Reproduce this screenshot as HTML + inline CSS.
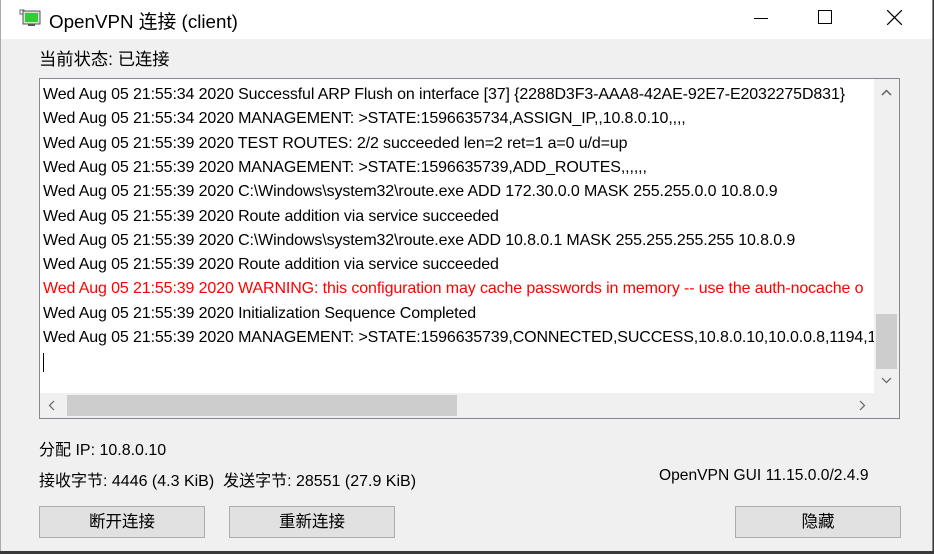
<!DOCTYPE html>
<html><head><meta charset="utf-8"><style>
*{margin:0;padding:0;box-sizing:border-box}
body{width:934px;height:554px;background:#3a3a3a;font-family:"Liberation Sans","Noto Sans CJK SC",sans-serif;position:relative;overflow:hidden;color:#000}
.win{position:absolute;left:0;top:0;width:933px;height:551px;background:#f0f0f0;border-right:1px solid #888;border-left:1px solid #aaa}
.title{position:absolute;left:0;top:0;width:100%;height:39px;background:#fff}
.t{position:absolute;font-size:18.8px;white-space:nowrap}
.s{position:absolute;font-size:15px;white-space:nowrap}
.log{position:absolute;left:38px;top:78px;width:861px;height:341px;background:#fff;border:1px solid #828790}
.line{position:absolute;left:3px;font-size:16px;white-space:nowrap;letter-spacing:-0.12px}
.vs{position:absolute;left:834px;top:0;width:25px;height:314px;background:#f0f0f0}
.hs{position:absolute;left:0;top:314px;width:834px;height:25px;background:#f0f0f0}
.corner{position:absolute;left:834px;top:314px;width:25px;height:25px;background:#f0f0f0}
.btn{position:absolute;top:506px;width:166px;height:32px;background:#e1e1e1;border:1px solid #adadad;font-size:16.5px;text-align:center;line-height:30px}
</style></head><body>
<div class="win">
<div class="title">
<svg style="position:absolute;left:18px;top:9px" width="22" height="18" viewBox="0 0 22 18"><rect x="1" y="1" width="4" height="4" fill="#fff" stroke="#666"/><rect x="4" y="2" width="17" height="13" fill="#ddd" stroke="#555"/><rect x="6" y="4" width="13" height="9" fill="#3c3"/><rect x="9" y="15" width="7" height="2" fill="#555"/></svg>
<div class="t" style="left:48px;top:7px">OpenVPN 连接 (client)</div>
<div style="position:absolute;left:753px;top:18px;width:14px;height:1px;background:#000"></div>
<div style="position:absolute;left:817px;top:10px;width:14px;height:14px;border:1px solid #000"></div>
<svg style="position:absolute;left:886px;top:10px" width="15" height="15"><path d="M0 0L15 15M15 0L0 15" stroke="#000" stroke-width="1.2"/></svg>
</div>
<div class="t" style="left:38px;top:45px;font-size:17.3px">当前状态: 已连接</div>
<div class="log">
<div class="line" style="top:7px">Wed Aug 05 21:55:34 2020 Successful ARP Flush on interface [37] {2288D3F3-AAA8-42AE-92E7-E2032275D831}</div>
<div class="line" style="top:31px">Wed Aug 05 21:55:34 2020 MANAGEMENT: &gt;STATE:1596635734,ASSIGN_IP,,10.8.0.10,,,,</div>
<div class="line" style="top:56px">Wed Aug 05 21:55:39 2020 TEST ROUTES: 2/2 succeeded len=2 ret=1 a=0 u/d=up</div>
<div class="line" style="top:80px">Wed Aug 05 21:55:39 2020 MANAGEMENT: &gt;STATE:1596635739,ADD_ROUTES,,,,,,</div>
<div class="line" style="top:104px">Wed Aug 05 21:55:39 2020 C:\Windows\system32\route.exe ADD 172.30.0.0 MASK 255.255.0.0 10.8.0.9</div>
<div class="line" style="top:129px">Wed Aug 05 21:55:39 2020 Route addition via service succeeded</div>
<div class="line" style="top:153px">Wed Aug 05 21:55:39 2020 C:\Windows\system32\route.exe ADD 10.8.0.1 MASK 255.255.255.255 10.8.0.9</div>
<div class="line" style="top:177px">Wed Aug 05 21:55:39 2020 Route addition via service succeeded</div>
<div class="line" style="top:201px;color:#f00">Wed Aug 05 21:55:39 2020 WARNING: this configuration may cache passwords in memory -- use the auth-nocache o</div>
<div class="line" style="top:226px">Wed Aug 05 21:55:39 2020 Initialization Sequence Completed</div>
<div class="line" style="top:250px">Wed Aug 05 21:55:39 2020 MANAGEMENT: &gt;STATE:1596635739,CONNECTED,SUCCESS,10.8.0.10,10.0.0.8,1194,1</div>
<div style="position:absolute;left:3px;top:274px;width:1px;height:19px;background:#000"></div>
<div class="vs"><div style="position:absolute;left:2px;top:235px;width:21px;height:55px;background:#cdcdcd"></div>
<svg style="position:absolute;left:7px;top:10px" width="11" height="8"><path d="M1 6L5.5 1.5L10 6" stroke="#606060" stroke-width="1.5" fill="none"/></svg>
<svg style="position:absolute;left:7px;top:297px" width="11" height="8"><path d="M1 2L5.5 6.5L10 2" stroke="#606060" stroke-width="1.2" fill="none"/></svg></div>
<div class="hs"><div style="position:absolute;left:27px;top:2px;width:390px;height:21px;background:#cdcdcd"></div>
<svg style="position:absolute;left:8px;top:7px" width="8" height="11"><path d="M6 1L1.5 5.5L6 10" stroke="#606060" stroke-width="1.2" fill="none"/></svg>
<svg style="position:absolute;left:818px;top:7px" width="8" height="11"><path d="M2 1L6.5 5.5L2 10" stroke="#606060" stroke-width="1.2" fill="none"/></svg></div>
<div class="corner"></div>
</div>
<div class="s" style="left:38px;top:436px;font-size:16px">分配 IP: 10.8.0.10</div>
<div class="s" style="left:38px;top:467px;font-size:16px">接收字节: 4446 (4.3 KiB)&nbsp; 发送字节: 28551 (27.9 KiB)</div>
<div class="s" style="left:658px;top:467px;font-size:15.6px">OpenVPN GUI 11.15.0.0/2.4.9</div>
<div class="btn" style="left:38px">断开连接</div>
<div class="btn" style="left:228px">重新连接</div>
<div class="btn" style="left:734px">隐藏</div>
</div>
</body></html>
